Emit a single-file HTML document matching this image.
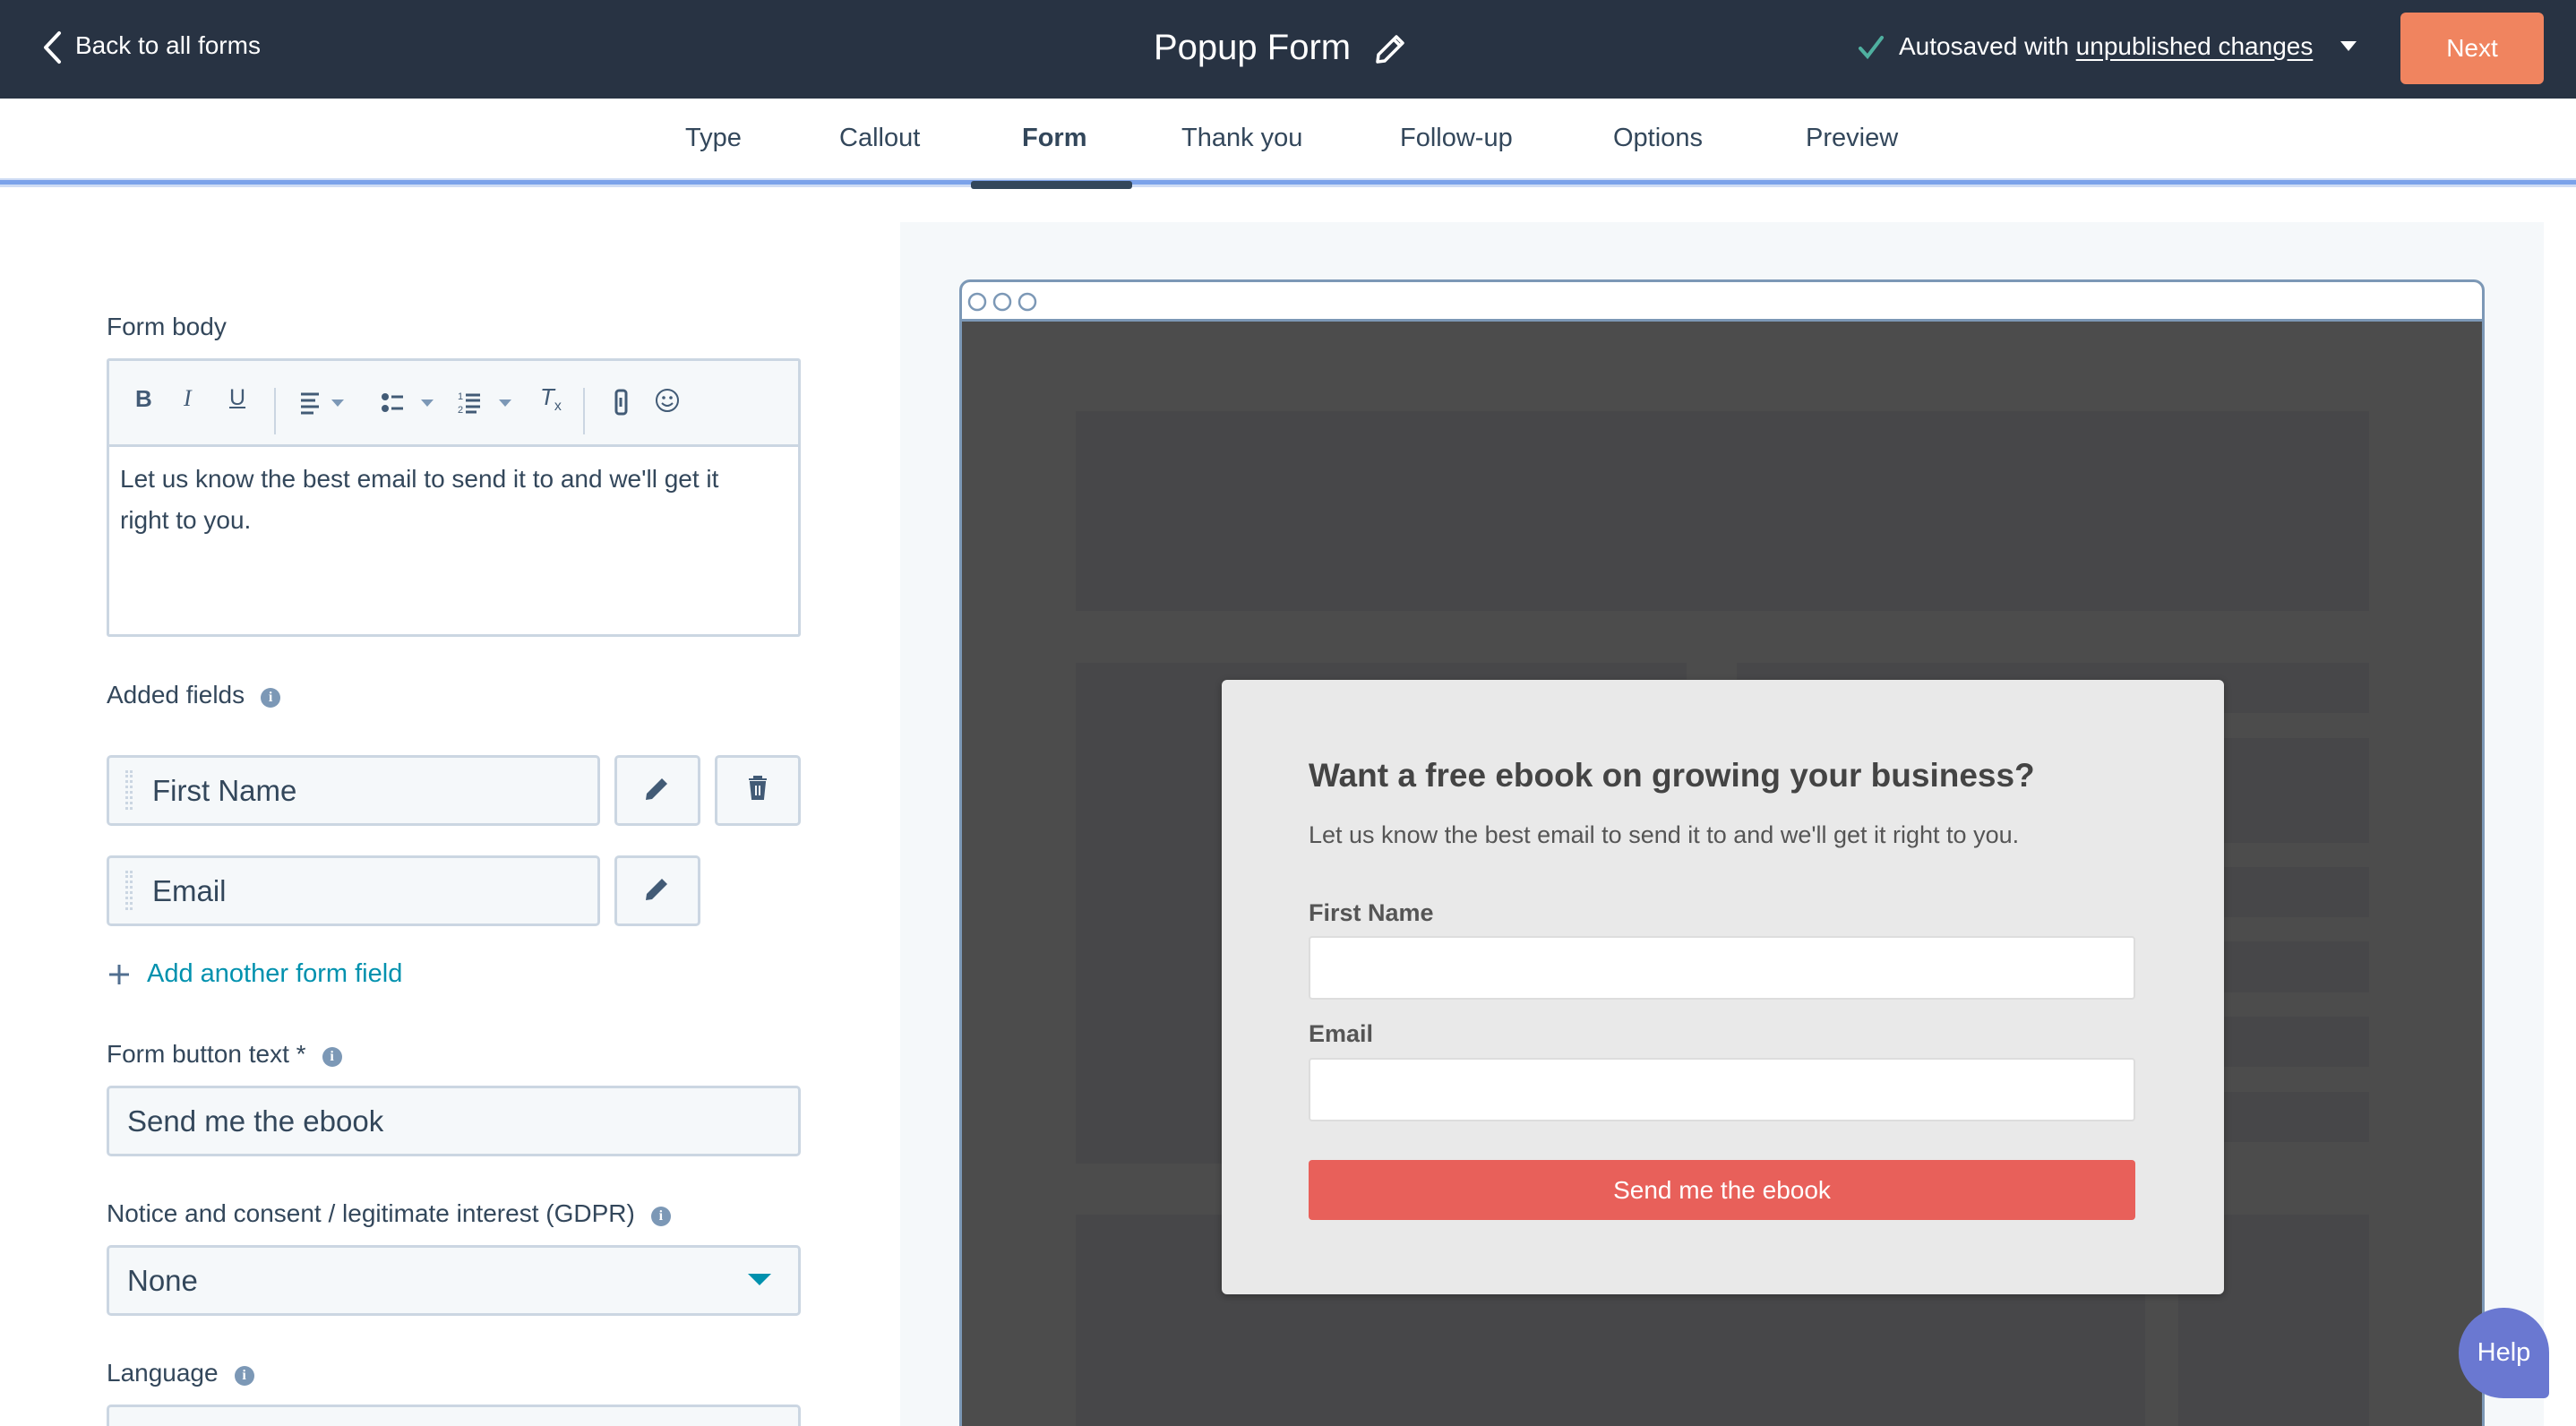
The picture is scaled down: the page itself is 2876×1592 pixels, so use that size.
<!DOCTYPE html>
<html style="overflow:hidden;width:2876px;height:1592px"><head><meta charset="utf-8"><style>
*{box-sizing:border-box;margin:0;padding:0}
html,body{overflow:hidden}
body{width:2876px;height:1592px;font-family:"Liberation Sans",sans-serif;background:#fff;color:#33475b}
#root{position:relative;width:2876px;height:1592px;overflow:hidden}
.a{position:absolute}
.hdr{left:0;top:0;width:2876px;height:110px;background:#283343}
.w{color:#fff}
.tab{top:138px;font-size:29px;color:#33475b;white-space:nowrap}
.lbl{font-size:28px;color:#33475b;white-space:nowrap;transform:translateY(-50%)}
.info{display:inline-block;width:22px;height:22px;border-radius:50%;background:#7c98b6;color:#fff;font-size:16px;font-weight:bold;text-align:center;line-height:22px;margin-left:18px;vertical-align:2px;font-family:"Liberation Serif",serif}
.box{border:3px solid #cbd6e2;border-radius:5px;background:#f5f8fa}
.fld{font-size:33px;color:#33475b}
.ph{background:#474749}
</style></head><body><div id="root">
<div class="a hdr"></div>
<svg class="a" style="left:46px;top:34px" width="24" height="38" viewBox="0 0 24 38"><path d="M20 3 L5 19 L20 35" fill="none" stroke="#fff" stroke-width="4" stroke-linecap="round" stroke-linejoin="round"/></svg>
<div class="a w" style="left:84px;top:35px;font-size:28px">Back to all forms</div>
<div class="a w" style="left:1288px;top:31px;font-size:40px">Popup Form</div>
<svg class="a" style="left:1535px;top:38px" width="34" height="34" viewBox="0 0 34 34"><path d="M24 3 L31 10 L11 30 L3 31 L4 23 Z M21 6 L28 13" fill="none" stroke="#fff" stroke-width="3.5" stroke-linejoin="round"/></svg>
<svg class="a" style="left:2074px;top:38px" width="30" height="30" viewBox="0 0 30 30"><path d="M3 16 L11 25 L27 4" fill="none" stroke="#4fb0a0" stroke-width="4" stroke-linecap="round"/></svg>
<div class="a w" style="left:2120px;top:36px;font-size:28px">Autosaved with <span style="text-decoration:underline;text-underline-offset:5px">unpublished changes</span></div>
<svg class="a" style="left:2613px;top:46px" width="18" height="12"><path d="M0 0 L18 0 L9 11 Z" fill="#fff"/></svg>
<div class="a" style="left:2680px;top:14px;width:160px;height:80px;background:#f0845f;border-radius:6px;color:#fff;font-size:28px;text-align:center;line-height:80px">Next</div>

<div class="a tab" style="left:765px">Type</div>
<div class="a tab" style="left:937px">Callout</div>
<div class="a tab" style="left:1141px;font-weight:bold">Form</div>
<div class="a tab" style="left:1319px">Thank you</div>
<div class="a tab" style="left:1563px">Follow-up</div>
<div class="a tab" style="left:1801px">Options</div>
<div class="a tab" style="left:2016px">Preview</div>
<div class="a" style="left:0;top:199px;width:2876px;height:10px;background:#cfdcf4"></div>
<div class="a" style="left:0;top:201px;width:2876px;height:5px;background:#7ba2ea"></div>
<div class="a" style="left:1084px;top:202px;width:180px;height:9px;background:#33475b;border-radius:3px"></div>

<div class="a lbl" style="left:119px;top:365px">Form body</div>
<div class="a" style="left:119px;top:400px;width:775px;height:311px;border:3px solid #cbd6e2;border-radius:3px;background:#fff"></div>
<div class="a" style="left:122px;top:403px;width:769px;height:96px;background:#f5f8fa;border-bottom:3px solid #cbd6e2"></div>
<div class="a" style="left:151px;top:430px;font-size:26px;font-weight:bold;color:#425b76">B</div>
<div class="a" style="left:205px;top:430px;font-size:26px;font-style:italic;font-family:'Liberation Serif',serif;color:#425b76">I</div>
<div class="a" style="left:256px;top:430px;font-size:25px;text-decoration:underline;color:#425b76">U</div>
<div class="a" style="left:306px;top:433px;width:2px;height:52px;background:#cbd6e2"></div>
<svg class="a" style="left:334px;top:434px" width="60" height="30"><path d="M2 6h20M2 13h16M2 20h20M2 27h14" stroke="#425b76" stroke-width="3"/><path d="M36 12h14l-7 8z" fill="#7c98b6"/></svg>
<svg class="a" style="left:424px;top:434px" width="70" height="30"><circle cx="6" cy="9" r="4" fill="#425b76"/><circle cx="6" cy="22" r="4" fill="#425b76"/><path d="M13 9h13M13 22h13" stroke="#425b76" stroke-width="3"/><path d="M46 12h14l-7 8z" fill="#7c98b6"/></svg>
<svg class="a" style="left:511px;top:434px" width="70" height="30"><text x="0" y="12" font-size="11" fill="#425b76">1</text><text x="0" y="27" font-size="11" fill="#425b76">2</text><path d="M9 7h16M9 13h16M9 20h16M9 26h12" stroke="#425b76" stroke-width="3"/><path d="M46 12h14l-7 8z" fill="#7c98b6"/></svg>
<div class="a" style="left:603px;top:428px;font-size:26px;font-style:italic;color:#425b76">T<sub style="font-size:16px;font-style:normal">x</sub></div>
<div class="a" style="left:651px;top:433px;width:2px;height:52px;background:#cbd6e2"></div>
<svg class="a" style="left:685px;top:434px" width="18" height="30"><rect x="3" y="2" width="11" height="26" rx="3" fill="none" stroke="#425b76" stroke-width="3"/><path d="M8 10v10" stroke="#425b76" stroke-width="3"/></svg>
<svg class="a" style="left:731px;top:433px" width="28" height="28"><circle cx="14" cy="14" r="12" fill="none" stroke="#425b76" stroke-width="2"/><circle cx="10" cy="11" r="1.8" fill="#425b76"/><circle cx="18" cy="11" r="1.8" fill="#425b76"/><path d="M8 17q6 6 12 0" fill="none" stroke="#425b76" stroke-width="2"/></svg>
<div class="a" style="left:134px;top:512px;font-size:28px;line-height:46px;color:#33475b;width:700px">Let us know the best email to send it to and we'll get it right to you.</div>

<div class="a lbl" style="left:119px;top:776px">Added fields<span class="info">i</span></div>
<div class="a box" style="left:119px;top:843px;width:551px;height:79px"></div>
<div class="a" style="left:140px;top:860px;width:8px;height:44px;border-left:3px dotted #cbd6e2;border-right:3px dotted #cbd6e2"></div>
<div class="a fld" style="left:170px;top:864px">First Name</div>
<div class="a box" style="left:686px;top:843px;width:96px;height:79px"></div>
<svg class="a" style="left:718px;top:866px" width="30" height="30" viewBox="0 0 30 30"><path d="M21 3 L27 9 L10 26 L3 27 L4 20 Z" fill="#425b76"/></svg>
<div class="a box" style="left:798px;top:843px;width:96px;height:79px"></div>
<svg class="a" style="left:835px;top:866px" width="22" height="28"><path d="M1 4h20M7 4V1h8v3M3 7h16l-2 19H5z" fill="#425b76" stroke="#425b76" stroke-width="2"/><path d="M9 11v11M13 11v11" stroke="#f5f8fa" stroke-width="2"/></svg>
<div class="a box" style="left:119px;top:955px;width:551px;height:79px"></div>
<div class="a" style="left:140px;top:972px;width:8px;height:44px;border-left:3px dotted #cbd6e2;border-right:3px dotted #cbd6e2"></div>
<div class="a fld" style="left:170px;top:976px">Email</div>
<div class="a box" style="left:686px;top:955px;width:96px;height:79px"></div>
<svg class="a" style="left:718px;top:978px" width="30" height="30" viewBox="0 0 30 30"><path d="M21 3 L27 9 L10 26 L3 27 L4 20 Z" fill="#425b76"/></svg>
<svg class="a" style="left:121px;top:1076px" width="24" height="24"><path d="M12 1v22M1 12h22" stroke="#516f90" stroke-width="3"/></svg>
<div class="a" style="left:164px;top:1071px;font-size:29px;color:#0091ae;white-space:nowrap">Add another form field</div>

<div class="a lbl" style="left:119px;top:1177px">Form button text *<span class="info">i</span></div>
<div class="a box" style="left:119px;top:1212px;width:775px;height:79px"></div>
<div class="a fld" style="left:142px;top:1233px">Send me the ebook</div>
<div class="a lbl" style="left:119px;top:1355px">Notice and consent / legitimate interest (GDPR)<span class="info">i</span></div>
<div class="a box" style="left:119px;top:1390px;width:775px;height:79px"></div>
<div class="a fld" style="left:142px;top:1411px">None</div>
<svg class="a" style="left:835px;top:1422px" width="26" height="14"><path d="M0 0h26L13 13z" fill="#0091ae"/></svg>
<div class="a lbl" style="left:119px;top:1533px">Language<span class="info">i</span></div>
<div class="a box" style="left:119px;top:1568px;width:775px;height:79px"></div>

<div class="a" style="left:1005px;top:248px;width:1835px;height:1344px;background:#f5f8fa"></div>
<div class="a" style="left:1071px;top:312px;width:1703px;height:1300px;border:3px solid #7c98b6;border-radius:12px 12px 0 0;background:#4c4c4c;overflow:hidden">
 <div style="position:absolute;left:0;top:0;right:0;height:44px;background:#fff;border-bottom:3px solid #7c98b6"></div>
 <svg style="position:absolute;left:6px;top:10px" width="90" height="24"><circle cx="11" cy="12" r="9" fill="none" stroke="#7c98b6" stroke-width="2.5"/><circle cx="39" cy="12" r="9" fill="none" stroke="#7c98b6" stroke-width="2.5"/><circle cx="67" cy="12" r="9" fill="none" stroke="#7c98b6" stroke-width="2.5"/></svg>
</div>
<div class="a ph" style="left:1201px;top:459px;width:1444px;height:223px"></div>
<div class="a ph" style="left:1201px;top:740px;width:682px;height:559px"></div>
<div class="a ph" style="left:1939px;top:740px;width:706px;height:56px"></div>
<div class="a ph" style="left:1939px;top:824px;width:706px;height:117px"></div>
<div class="a ph" style="left:1939px;top:968px;width:706px;height:56px"></div>
<div class="a ph" style="left:1939px;top:1051px;width:706px;height:57px"></div>
<div class="a ph" style="left:1939px;top:1135px;width:706px;height:56px"></div>
<div class="a ph" style="left:1939px;top:1219px;width:706px;height:56px"></div>
<div class="a ph" style="left:1201px;top:1356px;width:1194px;height:236px"></div>
<div class="a ph" style="left:2432px;top:1356px;width:213px;height:236px"></div>

<div class="a" style="left:1364px;top:759px;width:1119px;height:686px;background:#e9e9e9;border-radius:6px;box-shadow:0 2px 8px rgba(0,0,0,.3)"></div>
<div class="a" style="left:1461px;top:845px;font-size:37px;font-weight:bold;color:#444;white-space:nowrap">Want a free ebook on growing your business?</div>
<div class="a" style="left:1461px;top:917px;font-size:27px;color:#555;white-space:nowrap">Let us know the best email to send it to and we'll get it right to you.</div>
<div class="a" style="left:1461px;top:1004px;font-size:27px;font-weight:bold;color:#555">First Name</div>
<div class="a" style="left:1461px;top:1045px;width:923px;height:71px;background:#fff;border:2px solid #ddd;border-radius:4px"></div>
<div class="a" style="left:1461px;top:1139px;font-size:27px;font-weight:bold;color:#555">Email</div>
<div class="a" style="left:1461px;top:1181px;width:923px;height:71px;background:#fff;border:2px solid #ddd;border-radius:4px"></div>
<div class="a" style="left:1461px;top:1295px;width:923px;height:67px;background:#e8605a;border-radius:4px;color:#fff;font-size:28px;text-align:center;line-height:67px">Send me the ebook</div>

<div class="a" style="left:2745px;top:1460px;width:101px;height:101px;background:#6a78d1;border-radius:50px 50px 6px 50px;color:#fff;font-size:29px;text-align:center;line-height:101px">Help</div>
</div></body></html>
